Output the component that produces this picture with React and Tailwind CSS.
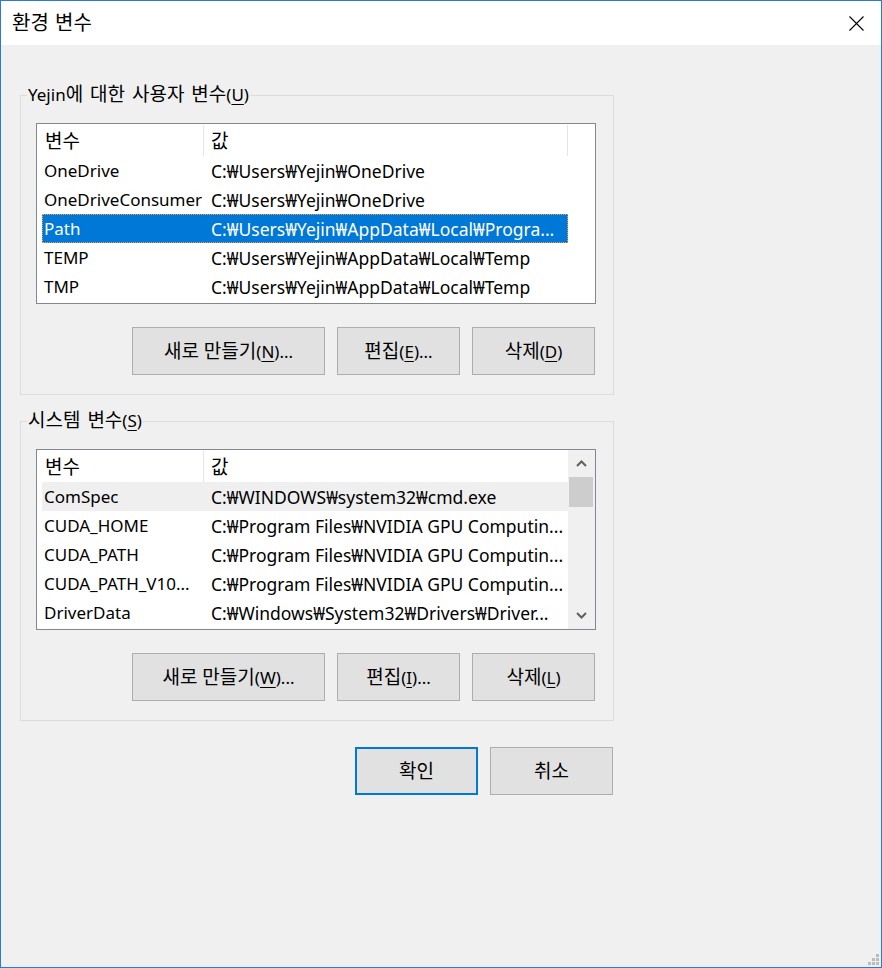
const userVars = [
  { name: "OneDrive", value: "C:₩Users₩Yejin₩OneDrive" },
  { name: "OneDriveConsumer", value: "C:₩Users₩Yejin₩OneDrive" },
  { name: "Path", value: "C:₩Users₩Yejin₩AppData₩Local₩Progra...", selected: true },
  { name: "TEMP", value: "C:₩Users₩Yejin₩AppData₩Local₩Temp" },
  { name: "TMP", value: "C:₩Users₩Yejin₩AppData₩Local₩Temp" },
];

const systemVars = [
  { name: "ComSpec", value: "C:₩WINDOWS₩system32₩cmd.exe", hover: true },
  { name: "CUDA_HOME", value: "C:₩Program Files₩NVIDIA GPU Computin..." },
  { name: "CUDA_PATH", value: "C:₩Program Files₩NVIDIA GPU Computin..." },
  { name: "CUDA_PATH_V10...", value: "C:₩Program Files₩NVIDIA GPU Computin..." },
  { name: "DriverData", value: "C:₩Windows₩System32₩Drivers₩Driver..." },
];

// Korean glyphs render smaller in Noto CJK than in the original font, so bump them
const K = ({ children }) => <span className="text-[19px] leading-none">{children}</span>;
const Mn = ({ children }) => <span className="underline underline-offset-[3px]">{children}</span>;

const Button = ({ children, width = "w-[123px]", primary = false }) => (
  <button
    type="button"
    className={`h-[48px] ${width} flex items-center justify-center bg-[#e1e1e1] text-black ${
      primary ? "border-2 border-[#0078d7]" : "border border-[#adadad]"
    }`}
  >
    <span>{children}</span>
  </button>
);

const Row = ({ row }) => (
  <div
    className={`h-[29px] w-[526px] flex ${
      row.selected
        ? "bg-[#0078d7] text-white outline-1 outline-dotted outline-[#f0a040] -outline-offset-1"
        : row.hover
        ? "bg-[#efefef] text-black"
        : "text-black"
    }`}
  >
    <div className="w-[162px] pl-[2px] pt-[1px] leading-[28px] whitespace-nowrap overflow-hidden">
      {row.name}
    </div>
    <div className="flex-1 pl-[7px] pt-[1px] leading-[28px] text-[17.5px] whitespace-nowrap overflow-hidden">
      {row.value}
    </div>
  </div>
);

const Chevron = ({ down }) => (
  <svg width="11" height="7" viewBox="0 0 11 7" className={down ? "rotate-180" : ""}>
    <path d="M1 6 L5.5 1.5 L10 6" fill="none" stroke="#606060" strokeWidth="2" />
  </svg>
);

const VarList = ({ rows, scroll }) => (
  <div className="ml-[15px] mt-[16px] w-[560px] h-[181px] border border-[#828790] bg-white flex">
    <div className="w-[531px] flex flex-col">
      <div className="h-[32px] flex shrink-0">
        <div className="w-[166px] pl-[8px] pt-[2px] flex items-center">
          <K>변수</K>
        </div>
        <div className="w-px h-[31px] mt-[1px] bg-[#e5e5e5]" />
        <div className="w-[363px] pl-[7px] pt-[2px] flex items-center">
          <K>값</K>
        </div>
        {!scroll && <div className="w-px h-[31px] mt-[1px] bg-[#e5e5e5]" />}
      </div>
      <div className="pl-[5px]">
        {rows.map((row) => (
          <Row key={row.name} row={row} />
        ))}
      </div>
    </div>
    {scroll && (
      <div className="w-[27px] bg-[#f0f0f0] flex flex-col">
        <div className="h-[27px] flex items-center justify-center">
          <Chevron />
        </div>
        <div className="ml-[1px] w-[24px] h-[30px] bg-[#cdcdcd]" />
        <div className="flex-1" />
        <div className="h-[27px] flex items-center justify-center">
          <Chevron down />
        </div>
      </div>
    )}
  </div>
);

const Group = ({ label, rows, scroll, buttons, className = "" }) => (
  <fieldset className={`w-[594px] border border-[#dcdcdc] ${className}`}>
    <legend className="ml-[6px] px-[1px] h-[24px] leading-[24px] [word-spacing:2px]">{label}</legend>
    <VarList rows={rows} scroll={scroll} />
    <div className="mt-[23px] pb-[19px] pr-[18px] flex justify-end gap-[12px]">{buttons}</div>
  </fieldset>
);

export default function App() {
  return (
    <div className="relative w-[882px] h-[968px] border border-[#2b7ad3] bg-[#f0f0f0] flex flex-col text-[17px] leading-none text-black font-['Noto_Sans','Noto_Sans_CJK_KR',sans-serif]">
      <div className="h-[44px] shrink-0 bg-white flex items-center justify-between">
        <span className="pl-[11px] text-[20px] [word-spacing:1px]">환경 변수</span>
        <svg width="15" height="15" viewBox="0 0 15 15" className="mr-[17px]">
          <path d="M0.5 0.5 L14.5 14.5 M14.5 0.5 L0.5 14.5" stroke="#000" strokeWidth="1.1" />
        </svg>
      </div>

      <div className="pl-[19px] pt-[38px]">
        <Group
          label={
            <>
              Yejin<K>에 대한 사용자 변수</K>(<Mn>U</Mn>)
            </>
          }
          rows={userVars}
          buttons={
            <>
              <Button width="w-[193px]">
                <K>새로 만들기</K>(<Mn>N</Mn>)...
              </Button>
              <Button>
                <K>편집</K>(<Mn>E</Mn>)...
              </Button>
              <Button>
                <K>삭제</K>(<Mn>D</Mn>)
              </Button>
            </>
          }
        />

        <Group
          className="mt-[14px]"
          label={
            <>
              <K>시스템 변수</K>(<Mn>S</Mn>)
            </>
          }
          rows={systemVars}
          scroll
          buttons={
            <>
              <Button width="w-[193px]">
                <K>새로 만들기</K>(<Mn>W</Mn>)...
              </Button>
              <Button>
                <K>편집</K>(<Mn>I</Mn>)...
              </Button>
              <Button>
                <K>삭제</K>(<Mn>L</Mn>)
              </Button>
            </>
          }
        />

        <div className="w-[594px] mt-[26px] pr-[1px] flex justify-end gap-[12px]">
          <Button primary>
            <K>확인</K>
          </Button>
          <Button>
            <K>취소</K>
          </Button>
        </div>
      </div>

      <svg width="12" height="12" viewBox="0 0 12 12" className="absolute right-[1px] bottom-[1px]">
        <rect x="8" y="0" width="3" height="3" fill="#bcbcbc" />
        <rect x="4" y="4" width="3" height="3" fill="#bcbcbc" />
        <rect x="8" y="4" width="3" height="3" fill="#bcbcbc" />
        <rect x="0" y="8" width="3" height="3" fill="#bcbcbc" />
        <rect x="4" y="8" width="3" height="3" fill="#bcbcbc" />
        <rect x="8" y="8" width="3" height="3" fill="#bcbcbc" />
      </svg>
    </div>
  );
}
